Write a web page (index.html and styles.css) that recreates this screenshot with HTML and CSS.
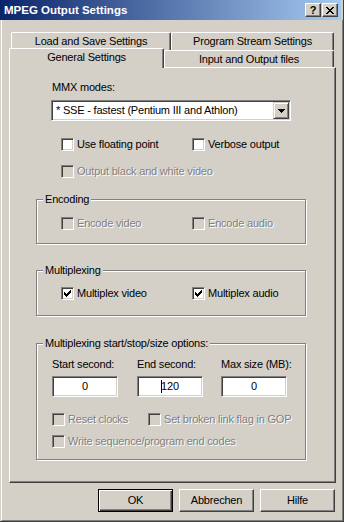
FILE: index.html
```html
<!DOCTYPE html>
<html lang="de">
<head>
  <meta charset="UTF-8" />
  <title>MPEG Output Settings</title>
  <link rel="stylesheet" href="styles.css">
</head>
<body>
  <div class="window">
    <div class="titlebar">
      <span class="title">MPEG Output Settings</span>
      <div class="title-buttons">
        <span class="tbtn help">?</span>
        <span class="tbtn close">
          <svg width="8" height="7" viewBox="0 0 8 7"><path d="M0 0h2v1H0zM6 0h2v1H6zM1 1h2v1H1zM5 1h2v1H5zM2 2h4v1H2zM3 3h2v1H3zM2 4h4v1H2zM1 5h2v1H1zM5 5h2v1H5zM0 6h2v1H0zM6 6h2v1H6z" fill="#000"/></svg>
        </span>
      </div>
    </div>

    <div class="frame">
      <div class="tabs">
        <div class="tab-row back">
          <div class="tab load">Load and Save Settings</div>
          <div class="tab program">Program Stream Settings</div>
        </div>
        <div class="tab-row front">
          <div class="tab general active">General Settings</div>
          <div class="tab io">Input and Output files</div>
        </div>
      </div>

      <div class="panel">
        <div class="mmx-label">MMX modes:</div>
        <div class="combo">
          <span class="combo-text">* SSE - fastest (Pentium III and Athlon)</span>
          <span class="combo-btn">
            <svg width="7" height="4" viewBox="0 0 7 4"><path d="M0 0h7v1H0zM1 1h5v1H1zM2 2h3v1H2zM3 3h1v1H3z" fill="#000"/></svg>
          </span>
        </div>

        <div class="checks first">
          <div class="check"><span class="box"></span>Use floating point</div>
          <div class="check"><span class="box"></span>Verbose output</div>
        </div>
        <div class="checks second">
          <div class="check disabled"><span class="box"></span>Output black and white video</div>
        </div>

        <div class="group encoding">
          <div class="group-title">Encoding</div>
          <div class="checks">
            <div class="check disabled"><span class="box"></span>Encode video</div>
            <div class="check disabled"><span class="box"></span>Encode audio</div>
          </div>
        </div>

        <div class="group multiplexing">
          <div class="group-title">Multiplexing</div>
          <div class="checks">
            <div class="check"><span class="box checked"><svg width="7" height="7" viewBox="0 0 7 7"><path d="M0 2h1v3H0zM1 3h1v3H1zM2 4h1v3H2zM3 3h1v3H3zM4 2h1v3H4zM5 1h1v3H5zM6 0h1v3H6z" fill="#000"/></svg></span>Multiplex video</div>
            <div class="check"><span class="box checked"><svg width="7" height="7" viewBox="0 0 7 7"><path d="M0 2h1v3H0zM1 3h1v3H1zM2 4h1v3H2zM3 3h1v3H3zM4 2h1v3H4zM5 1h1v3H5zM6 0h1v3H6z" fill="#000"/></svg></span>Multiplex audio</div>
          </div>
        </div>

        <div class="group startstop">
          <div class="group-title">Multiplexing start/stop/size options:</div>
          <div class="fields">
            <span>Start second:</span>
            <span>End second:</span>
            <span>Max size (MB):</span>
            <div class="edit">0</div>
            <div class="edit"><span class="caret"></span>120</div>
            <div class="edit">0</div>
          </div>
          <div class="checks reset-row">
            <div class="check disabled"><span class="box"></span>Reset clocks</div>
            <div class="check disabled"><span class="box"></span>Set broken link flag in GOP</div>
          </div>
          <div class="checks write-row">
            <div class="check disabled"><span class="box"></span>Write sequence/program end codes</div>
          </div>
        </div>
      </div>

      <div class="buttons">
        <button class="btn default">OK</button>
        <button class="btn">Abbrechen</button>
        <button class="btn">Hilfe</button>
      </div>
    </div>
  </div>
</body>
</html>
```

FILE: styles.css
```css
body {
  margin: 0;
  font-family: "Liberation Sans", Arial, sans-serif;
  font-size: 11px;
  line-height: 13px;
  letter-spacing: -0.2px;
  color: #000;
  background: #d4d0c8;
}
.window {
  width: 344px;
  height: 522px;
  box-sizing: border-box;
  background: #d4d0c8;
  border-right: 1px solid #404040;
  border-bottom: 1px solid #404040;
  display: flex;
  flex-direction: column;
}
.titlebar {
  width: 341px;
  height: 20px;
  box-sizing: border-box;
  background: linear-gradient(to right, #0a246a, #a6caf0);
  display: flex;
  align-items: center;
  justify-content: space-between;
  padding: 0 3px 0 4px;
}
.title {
  color: #fff;
  font-weight: bold;
  font-size: 11.5px;
  letter-spacing: 0;
}
.title-buttons {
  display: flex;
  gap: 1px;
}
.tbtn {
  width: 16px;
  height: 14px;
  box-sizing: border-box;
  background: #d4d0c8;
  border: 1px solid;
  border-color: #fff #404040 #404040 #fff;
  box-shadow: inset -1px -1px #808080;
  display: flex;
  align-items: center;
  justify-content: center;
  font-weight: bold;
  font-size: 11px;
}
.frame {
  flex: 1;
  margin-left: 1px;
  border-left: 1px solid #fff;
  border-right: 1px solid #808080;
  border-bottom: 1px solid #808080;
  padding: 12px 6px 0 7px;
}

/* tabs */
.tab-row {
  display: flex;
}
.tab-row.back {
  height: 18px;
  padding-left: 2px;
}
.tab-row.front {
  height: 17px;
  align-items: flex-end;
}
.tab {
  box-sizing: border-box;
  height: 18px;
  border-top: 1px solid #fff;
  border-left: 1px solid #fff;
  border-right: 1px solid #404040;
  box-shadow: inset -1px 0 #808080;
  border-radius: 2px 2px 0 0;
  text-align: center;
  line-height: 17px;
  background: #d4d0c8;
}
.tab.load { width: 160px; }
.tab.program { width: 163px; }
.tab.io { width: 170px; height: 17px; line-height: 17px; }
.tab.general {
  width: 155px;
  height: 20px;
  margin-bottom: -1px;
  line-height: 17px;
  position: relative;
  z-index: 1;
}

/* page */
.panel {
  width: 327px;
  height: 416px;
  box-sizing: border-box;
  border: 1px solid;
  border-color: #fff #404040 #404040 #fff;
  box-shadow: inset -1px -1px #808080;
  padding: 13px 29px 0 26px;
}
.mmx-label {
  margin-left: 16px;
}
.combo {
  width: 240px;
  height: 21px;
  box-sizing: border-box;
  margin: 6px 0 0 15px;
  background: #fff;
  border: 1px solid;
  border-color: #808080 #fff #fff #808080;
  box-shadow: inset 1px 1px #404040, inset -1px -1px #d4d0c8;
  padding: 1px;
  display: flex;
  align-items: center;
}
.combo-text {
  flex: 1;
  padding-left: 3px;
}
.combo-btn {
  width: 16px;
  height: 17px;
  box-sizing: border-box;
  background: #d4d0c8;
  border: 1px solid;
  border-color: #d4d0c8 #404040 #404040 #d4d0c8;
  box-shadow: inset 1px 1px #fff, inset -1px -1px #808080;
  display: flex;
  align-items: center;
  justify-content: center;
}

.checks {
  display: flex;
  padding-left: 25px;
}
.checks.first { margin-top: 17px; }
.checks.first .check:first-child { width: 131px; }
.checks.second { margin-top: 14px; }
.check {
  display: flex;
  align-items: center;
  height: 13px;
  white-space: nowrap;
  flex-shrink: 0;
}
.box {
  flex-shrink: 0;
  width: 13px;
  height: 13px;
  box-sizing: border-box;
  margin-right: 3px;
  background: #fff;
  border: 1px solid;
  border-color: #808080 #fff #fff #808080;
  box-shadow: inset 1px 1px #404040, inset -1px -1px #d4d0c8;
  display: flex;
  align-items: center;
  justify-content: center;
}
.check.disabled {
  color: #808080;
  text-shadow: 1px 1px 0 #fff;
}
.check.disabled .box {
  background: #d4d0c8;
}

/* group boxes */
.group {
  border: 1px solid #808080;
  box-shadow: 1px 1px 0 #fff, inset 1px 1px 0 #fff;
}
.group-title {
  display: table;
  margin: -7px 0 0 6px;
  padding: 0 2px;
  background: #d4d0c8;
  white-space: nowrap;
}
.group .checks {
  padding-left: 24px;
}
.group .checks .check:first-child { width: 131px; }
.group.encoding {
  margin-top: 21px;
  padding-bottom: 13px;
}
.group.encoding .checks { margin-top: 11px; }
.group.multiplexing {
  margin-top: 26px;
  padding-bottom: 15px;
}
.group.multiplexing .checks { margin-top: 10px; }
.group.startstop {
  margin-top: 27px;
  padding: 0 0 11px 0;
}
.fields {
  display: grid;
  grid-template-columns: 85px 84px 80px;
  row-gap: 5px;
  margin-top: 8px;
  padding-left: 15px;
  white-space: nowrap;
}
.edit {
  width: 66px;
  height: 21px;
  box-sizing: border-box;
  background: #fff;
  border: 1px solid;
  border-color: #808080 #fff #fff #808080;
  box-shadow: inset 1px 1px #404040, inset -1px -1px #d4d0c8;
  display: flex;
  align-items: center;
  justify-content: center;
}
.caret {
  width: 1px;
  height: 13px;
  background: #000;
  margin-right: -1px;
}
.group.startstop .checks {
  padding-left: 15px;
}
.group.startstop .reset-row { margin-top: 16px; }
.group.startstop .reset-row .check:first-child { width: 96px; }
.group.startstop .write-row { margin-top: 9px; }

/* dialog buttons */
.buttons {
  display: flex;
  justify-content: flex-end;
  gap: 6px;
  margin: 6px 1px 0 0;
}
.btn {
  width: 75px;
  height: 23px;
  box-sizing: border-box;
  font: inherit;
  letter-spacing: -0.2px;
  color: #000;
  background: #d4d0c8;
  border: 1px solid;
  border-color: #fff #404040 #404040 #fff;
  box-shadow: inset -1px -1px #808080;
  padding: 0;
}
.btn.default {
  border-color: #000;
  box-shadow: inset 1px 1px #fff, inset -1px -1px #404040, inset -2px -2px #808080;
}
```
